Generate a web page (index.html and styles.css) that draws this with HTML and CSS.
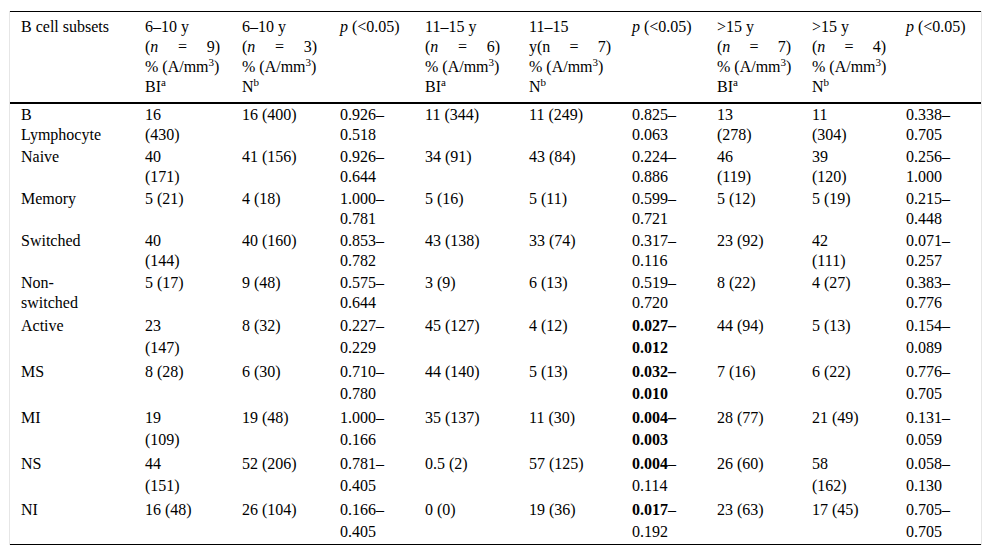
FILE: index.html
```html
<!DOCTYPE html>
<html>
<head>
<meta charset="utf-8">
<link rel="stylesheet" href="styles.css">
</head>
<body>
<div class="wrap">
<table class="data">
<colgroup>
<col class="c1"><col class="c2"><col class="c3"><col class="c4"><col class="c5"><col class="c6"><col class="c7"><col class="c8"><col class="c9"><col class="c10">
</colgroup>
<thead>
<tr>
<th>B cell subsets</th>
<th>6–10 y<br><span class="jl"><span>(<i>n</i></span><span>=</span><span>9)</span></span>% (A/mm<sup>3</sup>)<br>BI<sup>a</sup></th>
<th>6–10 y<br><span class="jl"><span>(<i>n</i></span><span>=</span><span>3)</span></span>% (A/mm<sup>3</sup>)<br>N<sup>b</sup></th>
<th><i>p</i> (&lt;0.05)</th>
<th>11–15 y<br><span class="jl"><span>(<i>n</i></span><span>=</span><span>6)</span></span>% (A/mm<sup>3</sup>)<br>BI<sup>a</sup></th>
<th>11–15<br><span class="jl"><span>y(n</span><span>=</span><span>7)</span></span>% (A/mm<sup>3</sup>)<br>N<sup>b</sup></th>
<th><i>p</i> (&lt;0.05)</th>
<th>&gt;15 y<br><span class="jl"><span>(<i>n</i></span><span>=</span><span>7)</span></span>% (A/mm<sup>3</sup>)<br>BI<sup>a</sup></th>
<th>&gt;15 y<br><span class="jl"><span>(<i>n</i></span><span>=</span><span>4)</span></span>% (A/mm<sup>3</sup>)<br>N<sup>b</sup></th>
<th><i>p</i> (&lt;0.05)</th>
</tr>
</thead>
<tbody>
<tr>
<td>B<br>Lymphocyte</td><td>16<br>(430)</td><td>16 (400)</td><td>0.926–<br>0.518</td><td>11 (344)</td><td>11 (249)</td><td>0.825–<br>0.063</td><td>13<br>(278)</td><td>11<br>(304)</td><td>0.338–<br>0.705</td>
</tr>
<tr>
<td>Naive</td><td>40<br>(171)</td><td>41 (156)</td><td>0.926–<br>0.644</td><td>34 (91)</td><td>43 (84)</td><td>0.224–<br>0.886</td><td>46<br>(119)</td><td>39<br>(120)</td><td>0.256–<br>1.000</td>
</tr>
<tr>
<td>Memory</td><td>5 (21)</td><td>4 (18)</td><td>1.000–<br>0.781</td><td>5 (16)</td><td>5 (11)</td><td>0.599–<br>0.721</td><td>5 (12)</td><td>5 (19)</td><td>0.215–<br>0.448</td>
</tr>
<tr>
<td>Switched</td><td>40<br>(144)</td><td>40 (160)</td><td>0.853–<br>0.782</td><td>43 (138)</td><td>33 (74)</td><td>0.317–<br>0.116</td><td>23 (92)</td><td>42<br>(111)</td><td>0.071–<br>0.257</td>
</tr>
<tr>
<td>Non-<br>switched</td><td>5 (17)</td><td>9 (48)</td><td>0.575–<br>0.644</td><td>3 (9)</td><td>6 (13)</td><td>0.519–<br>0.720</td><td>8 (22)</td><td>4 (27)</td><td>0.383–<br>0.776</td>
</tr>
<tr class="tall">
<td>Active</td><td>23<br>(147)</td><td>8 (32)</td><td>0.227–<br>0.229</td><td>45 (127)</td><td>4 (12)</td><td><b>0.027–<br>0.012</b></td><td>44 (94)</td><td>5 (13)</td><td>0.154–<br>0.089</td>
</tr>
<tr class="tall">
<td>MS</td><td>8 (28)</td><td>6 (30)</td><td>0.710–<br>0.780</td><td>44 (140)</td><td>5 (13)</td><td><b>0.032–<br>0.010</b></td><td>7 (16)</td><td>6 (22)</td><td>0.776–<br>0.705</td>
</tr>
<tr class="tall">
<td>MI</td><td>19<br>(109)</td><td>19 (48)</td><td>1.000–<br>0.166</td><td>35 (137)</td><td>11 (30)</td><td><b>0.004–<br>0.003</b></td><td>28 (77)</td><td>21 (49)</td><td>0.131–<br>0.059</td>
</tr>
<tr class="tall">
<td>NS</td><td>44<br>(151)</td><td>52 (206)</td><td>0.781–<br>0.405</td><td>0.5 (2)</td><td>57 (125)</td><td><b>0.004</b>–<br>0.114</td><td>26 (60)</td><td>58<br>(162)</td><td>0.058–<br>0.130</td>
</tr>
<tr class="tall">
<td>NI</td><td>16 (48)</td><td>26 (104)</td><td>0.166–<br>0.405</td><td>0 (0)</td><td>19 (36)</td><td><b>0.017</b>–<br>0.192</td><td>23 (63)</td><td>17 (45)</td><td>0.705–<br>0.705</td>
</tr>
</tbody>
</table>
</div>
</body>
</html>
```

FILE: styles.css
```css
html, body {
  margin: 0;
  padding: 0;
  background: #fff;
}

body {
  font-family: "Liberation Serif", "Times New Roman", serif;
  font-size: 16px;
  color: #000;
}

.wrap {
  margin: 11px 0 0 9px;
  width: 971px;
  border-left: 1px solid #e6e6e6;
  border-right: 1px solid #e6e6e6;
}

.data {
  width: 971px;
  table-layout: fixed;
  border-collapse: collapse;
  border-top: 1px solid #000;
  border-bottom: 1px solid #000;
}

.c1 { width: 124px; }
.c2 { width: 97px; }
.c3 { width: 98px; }
.c4 { width: 85px; }
.c5 { width: 104px; }
.c6 { width: 103px; }
.c7 { width: 85px; }
.c8 { width: 95px; }
.c9 { width: 94px; }
.c10 { width: 86px; }

.data th,
.data td {
  text-align: left;
  vertical-align: top;
  white-space: nowrap;
  padding: 1px 0 1px 11px;
  line-height: 20px;
  font-weight: normal;
}

.data th {
  padding-top: 5px;
  padding-bottom: 5px;
}

.data thead tr {
  border-bottom: 2px solid #000;
}

.data tr.tall td {
  line-height: 22px;
}

.data b {
  font-weight: bold;
}

.jl {
  display: flex;
  justify-content: space-between;
  width: 75px;
}

.data th:nth-child(6) .jl { width: 82px; }
.data th:nth-child(8) .jl { width: 74px; }
.data th:nth-child(9) .jl { width: 74px; }

sup {
  font-size: 11px;
  line-height: 0;
  vertical-align: 6px;
}
```
